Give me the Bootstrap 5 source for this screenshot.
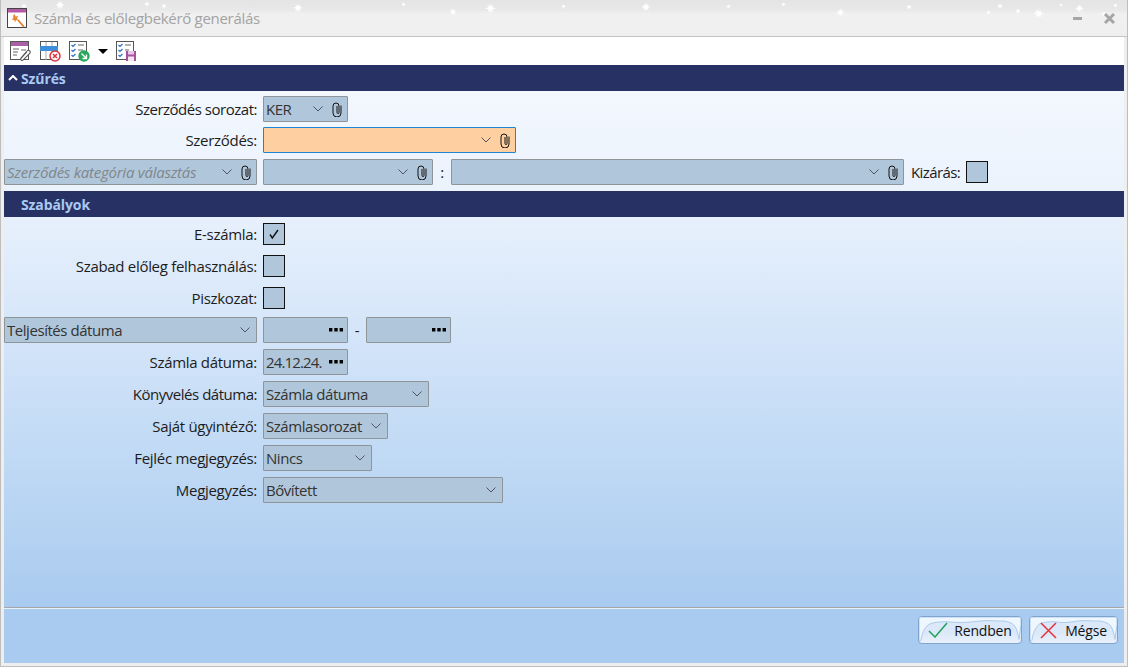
<!DOCTYPE html>
<html lang="hu">
<head>
<meta charset="utf-8">
<title>Számla és előlegbekérő generálás</title>
<link href="https://cdn.jsdelivr.net/npm/bootstrap@5.3.0/dist/css/bootstrap.min.css" rel="stylesheet">
<style>
html,body{height:100%;margin:0;overflow:hidden}
body{font-family:"Open Sans","Noto Sans",sans-serif;font-size:15px;letter-spacing:-.3px;color:#1c1c1c;background:#eeeeee}
.win{width:1128px;height:667px;display:flex;flex-direction:column;background:#eee;border:1px solid #bdbdbd;border-top:0;padding:0 3px 3px 3px}
.titlebar{height:37px;position:relative;flex:none;margin:0 -3px;padding-left:6px;background:linear-gradient(#e4e4e4 0,#e8e8e8 10px,#f0f0f0 14px,#efefef 36px);border-bottom:1px solid #c4c4c4;gap:6px}
.snow{position:absolute;left:0;top:0;pointer-events:none}
.title-text{font-size:15px;color:#a3a3a3;letter-spacing:-.3px;position:relative}
.winbtn{position:absolute;top:0}
.winbtn-min{left:1072px}.winbtn-close{left:1102px}
.tools{height:28px;background:#fff;flex:none;padding-left:6px;gap:9px}
.tools svg{display:block}
.tool-tight{margin-left:-1px}
.caret-drop{width:0;height:0;border-left:5px solid transparent;border-right:5px solid transparent;border-top:5px solid #000;margin:0 -1px 0 -1px}
.sect{height:26px;background:#283164;color:#a9caf2;font-weight:700;font-size:14px;flex:none;padding-left:4px;letter-spacing:-.1px}
.sect-chev{width:13px;flex:none}
.mainarea{flex:1;display:flex;flex-direction:column;background:linear-gradient(#f5f9ff 0,#eaf2fc 25%,#cfe2f8 55%,#a9cbef 100%);min-height:0}
.pane{display:flex;flex-direction:column}
.pane-a{padding-top:5px;height:100px}
.pane-b{padding-top:4px;gap:6px}
.frow{height:26px;display:flex;align-items:center;flex:none;line-height:24px}
.frow-a2{margin-top:5px}.frow-a3{margin-top:6px}
.lab{width:253px;text-align:right;flex:none;margin-right:6px;white-space:nowrap}
.lab-tight{letter-spacing:-.48px}
.fld{height:26px;background:#b0c6da;border:1px solid #8f9498;border-radius:1px;display:flex;align-items:center;flex:none;color:#333;padding:0 0 0 2px;white-space:nowrap;letter-spacing:-.45px}
.fld-txt{flex:1;min-width:0;overflow:hidden}
.fld .chev{flex:none;margin-right:6px}
.fld .clip{flex:none;margin:0 5px 0 3px}
.fld .dots{flex:none;margin-right:4px}
.dense{letter-spacing:-.85px}
.hot{background:#fed0a1;border-color:#1c86d4}
.ph{color:#80868c;font-style:italic;letter-spacing:-.25px}
.w85{width:85px}.w253{width:253px}.w170{width:170px}.w453{width:453px}.w166{width:166px}.w125{width:125px}.w109{width:109px}.w240{width:240px}
.gap6{margin-left:6px}
.cb{width:22px;height:22px;background:#b0c6da;border:1px solid #111;flex:none;display:flex;align-items:center;justify-content:center}
.sep{width:18px;text-align:center;flex:none}
.kiz{margin-left:7px;margin-right:6px;white-space:nowrap;letter-spacing:-.6px}
.foot{height:56px;flex:none;background:#a9cbef;border-top:1px solid #a6a6a6;box-shadow:inset 0 1px 0 #e8f0fa;padding:8px 6px 0 0;gap:7px}
.icebtn{position:relative;height:28px;border:1px solid #7fa3cc;border-radius:4px;background:linear-gradient(#dbe8f9,#dbe8f9 60%,#e9f1fc);padding:0;color:#111;display:flex;align-items:center;justify-content:center;letter-spacing:-.2px;overflow:hidden;font-size:14px}
.icebtn:hover{background:linear-gradient(#dbe8f9,#dbe8f9 60%,#e9f1fc);color:#111;border-color:#7fa3cc}
.ice{position:absolute;left:0;top:0;width:100%;height:100%;pointer-events:none}
.ok-btn{width:104px;gap:6px}.no-btn{width:89px;gap:8px}
.icebtn span,.icebtn .ic{position:relative}
</style>
</head>
<body>
<svg width="0" height="0" class="d-block position-absolute"><defs>
<symbol id="clip" viewBox="0 0 10 15"><path d="M9 3.500V11a4 4 0 0 1-8 0V4a3 3 0 0 1 6 0V10.500a1 1 0 0 1-2 0V4" fill="none" stroke="#111" stroke-width="1"/></symbol>
<symbol id="chev" viewBox="0 0 10 6"><path d="M.5.5 5 5 9.500.5" fill="none" stroke="#4c5560" stroke-width="1"/></symbol>
<symbol id="dots3" viewBox="0 0 14 4"><path d="M0 0h3.400v3.400H0zM5.300 0h3.400v3.400H5.300zM10.600 0H14v3.400h-3.400z" fill="#000"/></symbol>
<symbol id="flake" viewBox="0 0 12 12" overflow="visible"><path d="M6 0l.8 3.800L9.500 1.500 8 4.500 12 6 8 6.900l1.500 3.600L6.800 8 6 12 5.200 8l-2.700 2.500L4 6.900 0 6l4-1.500L2.500 1.500l2.700 2.300z" fill="#fff"/></symbol>
</defs></svg>
<div class="win">
  <div class="titlebar d-flex align-items-center">
    <svg class="snow" width="1128" height="36">
      <use href="#flake" x="54" y="0" width="10" height="10"/><use href="#flake" x="20" y="3" width="6" height="6"/><use href="#flake" x="143" y="1" width="6" height="6"/>
      <use href="#flake" x="160" y="3" width="6" height="6"/><use href="#flake" x="292" y="3" width="10" height="10"/><use href="#flake" x="484" y="3" width="11" height="11"/><use href="#flake" x="400" y="2" width="5" height="5"/><use href="#flake" x="448" y="8" width="8" height="8"/><use href="#flake" x="640" y="2" width="10" height="10"/><use href="#flake" x="560" y="4" width="5" height="5"/><use href="#flake" x="725" y="4" width="5" height="5"/><use href="#flake" x="835" y="8" width="9" height="9"/><use href="#flake" x="780" y="2" width="5" height="5"/><use href="#flake" x="905" y="4" width="6" height="6"/><use href="#flake" x="985" y="10" width="5" height="5"/><use href="#flake" x="996" y="3" width="6" height="6"/><use href="#flake" x="1014" y="8" width="6" height="6"/><use href="#flake" x="1032" y="8" width="11" height="11"/><use href="#flake" x="1058" y="3" width="4" height="4"/><use href="#flake" x="1074" y="4" width="9" height="9"/><use href="#flake" x="1100" y="11" width="6" height="6"/><use href="#flake" x="1112" y="3" width="5" height="5"/>
    </svg>
    <svg class="position-relative" width="21" height="21" viewBox="0 0 21 21"><rect x=".5" y=".5" width="19" height="19" fill="#fff" stroke="#444"/><rect x="1" y="1" width="18" height="3.500" fill="#b25aa6"/><path d="M11 12l6 7" stroke="#e0802b" stroke-width="1.800"/><path d="M7.500 6l1 2.500 2.500-.5-1 2.500 1.500 2-2.500-.5-1 2.500-.8-2.500-2.700-.5 2-1.500L6 8z" fill="#e8862e"/></svg>
    <span class="title-text">Számla és előlegbekérő generálás</span>
    <svg class="winbtn winbtn-min" width="12" height="36"><rect x="0" y="17" width="9" height="3" fill="#a6a6a6"/></svg>
    <svg class="winbtn winbtn-close" width="14" height="36"><path d="M2 14l9 9M11 14l-9 9" stroke="#a6a6a6" stroke-width="3"/></svg>
  </div>
  <div class="tools d-flex align-items-center">
    <svg width="21" height="21" viewBox="0 0 21 21"><rect x=".5" y=".5" width="18" height="18" fill="#fff" stroke="#555"/><rect x="1" y="1" width="17" height="4" fill="#a960a6"/><path d="M3 8h6M3 11h5M3 14h4" stroke="#666"/><path d="M11 9h5" stroke="#666"/><path d="M10.500 17.500l6.500-7.500a1.800 1.800 0 0 1 2.800 2.300L13 19a1.300 1.300 0 0 1-2-1.700l5.800-6.300" fill="#fff" stroke="#555" stroke-width="1.100"/></svg>
    <svg width="21" height="21" viewBox="0 0 21 21"><rect x=".5" y=".5" width="17" height="18" fill="#fff" stroke="#555"/><path d="M6 1v18M12 1v18" stroke="#aaa"/><rect x="0" y="5" width="18" height="5" fill="#3e8fdb"/><circle cx="15" cy="15" r="5" fill="#fff" stroke="#e0323c" stroke-width="1.500"/><path d="M13 13l4 4M17 13l-4 4" stroke="#e0323c" stroke-width="1.500"/></svg>
    <svg class="tool-tight" width="21" height="21" viewBox="0 0 21 21"><rect x=".5" y=".5" width="17" height="18" fill="#fff" stroke="#555"/><path d="M2.500 4l1.500 1.500L6.500 3M2.500 9l1.500 1.500L6.500 8M2.500 14l1.500 1.500L6.500 13" fill="none" stroke="#2d6fc4" stroke-width="1.200"/><path d="M9 4h6M9 9h5" stroke="#666"/><circle cx="15" cy="15" r="5.700" fill="#25a658"/><path d="M12.500 12.500l4.500 4.500M17.500 13.500V17.500H13.500" fill="none" stroke="#fff" stroke-width="1.400"/></svg>
    <span class="caret-drop"></span>
    <svg width="21" height="21" viewBox="0 0 21 21"><rect x=".5" y=".5" width="17" height="18" fill="#fff" stroke="#555"/><path d="M2.500 4l1.500 1.500L6.500 3M2.500 9l1.500 1.500L6.500 8M2.500 14l1.500 1.500L6.500 13" fill="none" stroke="#2d6fc4" stroke-width="1.200"/><path d="M9 4h6M9 9h4" stroke="#666"/><rect x="10" y="10" width="10" height="10" fill="#a750a0"/><rect x="12" y="10" width="6" height="3.500" fill="#e8c8e6"/><rect x="12" y="15.500" width="6" height="4.500" fill="#f2e4f1"/></svg>
  </div>
  <div class="mainarea">
    <div class="sect d-flex align-items-center">
      <span class="sect-chev d-flex"><svg width="10" height="6" viewBox="0 0 10 6"><path d="M1 5l4-4 4 4" fill="none" stroke="#fff" stroke-width="2"/></svg></span>
      <span class="sect-t">Szűrés</span>
    </div>
    <div class="pane pane-a">
      <div class="frow">
        <div class="lab lab-tight">Szerződés sorozat:</div>
        <div class="fld w85"><span class="fld-txt">KER</span><svg class="chev" width="10" height="6"><use href="#chev"/></svg><svg class="clip" width="10" height="15"><use href="#clip"/></svg></div>
      </div>
      <div class="frow frow-a2">
        <div class="lab">Szerződés:</div>
        <div class="fld w253 hot"><span class="fld-txt"></span><svg class="chev" width="10" height="6"><use href="#chev"/></svg><svg class="clip" width="10" height="15"><use href="#clip"/></svg></div>
      </div>
      <div class="frow frow-a3">
        <div class="fld w253 ph"><span class="fld-txt">Szerződés kategória választás</span><svg class="chev" width="10" height="6"><use href="#chev"/></svg><svg class="clip" width="10" height="15"><use href="#clip"/></svg></div>
        <div class="fld w170 gap6"><span class="fld-txt"></span><svg class="chev" width="10" height="6"><use href="#chev"/></svg><svg class="clip" width="10" height="15"><use href="#clip"/></svg></div>
        <div class="sep">:</div>
        <div class="fld w453"><span class="fld-txt"></span><svg class="chev" width="10" height="6"><use href="#chev"/></svg><svg class="clip" width="10" height="15"><use href="#clip"/></svg></div>
        <div class="kiz">Kizárás:</div>
        <div class="cb"></div>
      </div>
    </div>
    <div class="sect d-flex align-items-center">
      <span class="sect-chev"></span>
      <span class="sect-t">Szabályok</span>
    </div>
    <div class="pane pane-b">
      <div class="frow"><div class="lab">E-számla:</div><div class="cb"><svg width="12" height="12" viewBox="0 0 12 12"><path d="M2 6.500 4.300 10 10 2" fill="none" stroke="#111" stroke-width="1.400"/></svg></div></div>
      <div class="frow"><div class="lab">Szabad előleg felhasználás:</div><div class="cb"></div></div>
      <div class="frow"><div class="lab">Piszkozat:</div><div class="cb"></div></div>
      <div class="frow">
        <div class="fld w253"><span class="fld-txt">Teljesítés dátuma</span><svg class="chev" width="10" height="6"><use href="#chev"/></svg></div>
        <div class="fld w85 gap6"><span class="fld-txt"></span><svg class="dots" width="14" height="4"><use href="#dots3"/></svg></div>
        <div class="sep">-</div>
        <div class="fld w85"><span class="fld-txt"></span><svg class="dots" width="14" height="4"><use href="#dots3"/></svg></div>
      </div>
      <div class="frow"><div class="lab">Számla dátuma:</div><div class="fld w85"><span class="fld-txt dense">24.12.24.</span><svg class="dots" width="14" height="4"><use href="#dots3"/></svg></div></div>
      <div class="frow"><div class="lab lab-tight">Könyvelés dátuma:</div><div class="fld w166"><span class="fld-txt">Számla dátuma</span><svg class="chev" width="10" height="6"><use href="#chev"/></svg></div></div>
      <div class="frow"><div class="lab">Saját ügyintéző:</div><div class="fld w125"><span class="fld-txt">Számlasorozat</span><svg class="chev" width="10" height="6"><use href="#chev"/></svg></div></div>
      <div class="frow"><div class="lab">Fejléc megjegyzés:</div><div class="fld w109"><span class="fld-txt">Nincs</span><svg class="chev" width="10" height="6"><use href="#chev"/></svg></div></div>
      <div class="frow"><div class="lab">Megjegyzés:</div><div class="fld w240"><span class="fld-txt">Bővített</span><svg class="chev" width="10" height="6"><use href="#chev"/></svg></div></div>
    </div>
  </div>
  <div class="foot d-flex justify-content-end align-items-start">
    <button type="button" class="btn icebtn ok-btn">
      <svg class="ice" viewBox="0 0 104 28" preserveAspectRatio="none"><path d="M0 0H104V8L102 24C100 14 99 9 93 6 85 3 82 5 76 4 60 3 50 8 28 5 20 5 14 6 10 8 5 12 3 18 2 25L0 26Z" fill="#eef6fe" stroke="#9dbfe4" stroke-width=".8"/></svg>
      <svg class="ic" width="20" height="16" viewBox="0 0 20 16"><path d="M1 9l6 6L19 1" fill="none" stroke="#22a05a" stroke-width="1.500"/></svg>
      <span>Rendben</span>
    </button>
    <button type="button" class="btn icebtn no-btn">
      <svg class="ice" viewBox="0 0 89 28" preserveAspectRatio="none"><path d="M0 0H89V8L87 24C85 14 84 9 78 6 70 3 67 5 61 4 45 3 40 8 25 5 18 5 12 6 9 8 5 12 3 18 2 25L0 26Z" fill="#eef6fe" stroke="#9dbfe4" stroke-width=".8"/></svg>
      <svg class="ic" width="17" height="17" viewBox="0 0 17 17"><path d="M1 1l15 15M16 1L1 16" fill="none" stroke="#e8323c" stroke-width="1.500"/></svg>
      <span>Mégse</span>
    </button>
  </div>
</div>
<script src="https://cdn.jsdelivr.net/npm/bootstrap@5.3.0/dist/js/bootstrap.bundle.min.js"></script>
</body>
</html>
